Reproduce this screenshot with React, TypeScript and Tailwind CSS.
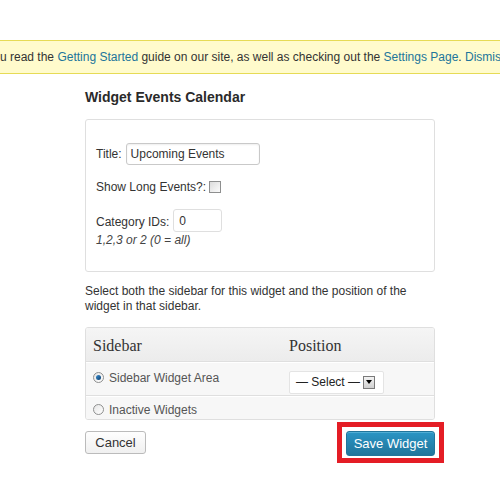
import React from 'react';

// radio button drawn with css so it looks like the old windows control
const Radio = ({ checked }: { checked?: boolean }) => (
  <span className="inline-flex items-center justify-center w-[11px] h-[11px] rounded-full border border-[#8e8f8f] bg-gradient-to-br from-[#e6e6e6] to-[#ffffff] shrink-0">
    {checked && <span className="w-[5px] h-[5px] rounded-full bg-gradient-to-br from-[#3a8fd2] to-[#0c3f6e]" />}
  </span>
);

export default function App() {
  return (
    <div className="w-[500px] h-[500px] bg-white overflow-hidden font-['Liberation_Sans',Arial,sans-serif] text-[12px] text-[#333]">
      <div className="h-[40px]" />

      {/* admin notice, clipped on both sides */}
      <div className="h-[34px] border-y border-[#e6db55] bg-[#fffbcc] flex items-center whitespace-nowrap overflow-hidden">
        <span>
          u read the <span className="text-[#21759b]">Getting Started</span> guide on our site, as well as checking out the{' '}
          <span className="text-[#21759b]">Settings Page</span>. <span className="text-[#21759b]">Dismiss</span>
        </span>
      </div>

      <div className="ml-[85px] w-[350px]">
        <h3 className="mt-[14px] text-[14px] leading-[18px] font-bold text-[#2a2a2a]">Widget Events Calendar</h3>

        {/* widget options */}
        <div className="mt-[13px] h-[153px] border border-[#dfdfdf] rounded-[3px] bg-white px-[10px] pt-[23px]">
          <div className="flex items-center h-[22px]">
            <span>Title:</span>
            <div className="ml-[4px] w-[134px] h-[22px] border border-[#c9c9c9] rounded-[3px] shadow-[inset_0_1px_2px_rgba(0,0,0,0.07)] flex items-center px-[4px] text-[12px]">
              Upcoming Events
            </div>
          </div>
          <div className="flex items-center h-[16px] mt-[14px]">
            <span>Show Long Events?:</span>
            <span className="ml-[3px] w-[12px] h-[12px] border border-[#8e8f8f] bg-gradient-to-br from-[#dcdcdc] to-[#fbfbfb]" />
          </div>
          <div className="flex items-center h-[23px] mt-[14px]">
            <span className="mt-[3px]">Category IDs:</span>
            <div className="ml-[4px] w-[49px] h-[23px] border border-[#dfdfdf] rounded-[3px] flex items-center px-[5px]">0</div>
          </div>
          <div className="italic text-[#444] leading-[15px] mt-[1px]">1,2,3 or 2 (0 = all)</div>
        </div>

        <p className="mt-[12px] leading-[15px] pr-[10px]">
          Select both the sidebar for this widget and the position of the widget in that sidebar.
        </p>

        {/* sidebar / position table */}
        <div className="mt-[13px] border border-[#dfdfdf] rounded-[3px] overflow-hidden">
          <div className="h-[34px] pt-[3px] bg-gradient-to-b from-[#f5f5f5] to-[#ececec] flex items-center border-b border-[#dfdfdf] font-['Liberation_Serif',Georgia,serif] text-[16px] text-[#333]">
            <span className="ml-[7px] w-[196px]">Sidebar</span>
            <span>Position</span>
          </div>
          <div className="h-[34px] bg-[#f7f7f7] border-t border-white border-b border-b-[#dfdfdf] flex items-center text-[#555]">
            <div className="ml-[7px] w-[196px] flex items-center gap-[5px] -mt-[3px]">
              <Radio checked />
              <span>Sidebar Widget Area</span>
            </div>
            <div className="w-[95px] h-[23px] bg-white border border-[#e4e4e4] rounded-[2px] flex items-center mt-[6px]">
              <span className="ml-[6px] text-[#222]">— Select —</span>
              <span className="ml-[3px] w-[12px] h-[13px] border border-[#7a7a7a] bg-gradient-to-b from-[#f3f3f3] to-[#cfcfcf] flex items-center justify-center">
                <span className="w-0 h-0 border-l-[3px] border-r-[3px] border-t-[4px] border-l-transparent border-r-transparent border-t-black" />
              </span>
            </div>
          </div>
          <div className="h-[23px] pt-[3px] bg-[#f7f7f7] border-t border-white flex items-center text-[#555]">
            <div className="ml-[7px] flex items-center gap-[5px]">
              <Radio />
              <span>Inactive Widgets</span>
            </div>
          </div>
        </div>

        <div className="flex justify-between items-start mt-[2px]">
          <button className="mt-[9px] w-[61px] h-[23px] border border-[#bbb] rounded-[3px] bg-gradient-to-b from-[#fefefe] to-[#f0f0f0] text-[#333] text-[13px]">
            Cancel
          </button>
          <div className="-mr-[9px] border-[5px] border-[#e41d25] pt-[4px] pb-[2px] px-[4px]">
            <button className="w-[89px] h-[25px] rounded-[3px] border border-[#21759b] bg-gradient-to-b from-[#2a95c5] to-[#21759b] text-white text-[13px] shadow-[inset_0_1px_0_rgba(120,200,230,0.5)]">
              Save Widget
            </button>
          </div>
        </div>
      </div>
    </div>
  );
}
